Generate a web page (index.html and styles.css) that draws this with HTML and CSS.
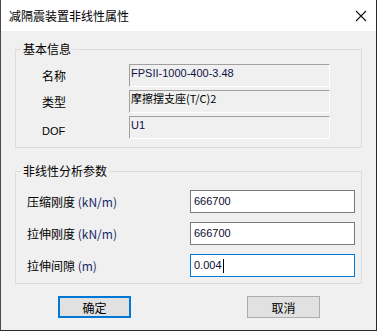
FILE: index.html
```html
<!DOCTYPE html>
<html lang="zh-CN">
<head>
    <meta charset="UTF-8">
    <title>减隔震装置非线性属性</title>
    <link rel="stylesheet" href="styles.css">
</head>
<body>
    <div class="dialog">
        <div class="titlebar">
            <span class="title">减隔震装置非线性属性</span>
            <svg class="close" width="12" height="12" viewBox="0 0 12 12">
                <path d="M1 1 L11 11 M11 1 L1 11" stroke="#111" stroke-width="1.1" fill="none"/>
            </svg>
        </div>

        <div class="content">
            <!-- 基本信息 -->
            <fieldset class="group">
                <legend>基本信息</legend>
                <div class="rows rows-info">
                    <div class="row">
                        <span class="label">名称</span>
                        <div class="readonly navy">FPSII-1000-400-3.48</div>
                    </div>
                    <div class="row">
                        <span class="label">类型</span>
                        <div class="readonly cjk">摩擦摆支座(T/C)2</div>
                    </div>
                    <div class="row">
                        <span class="label latin">DOF</span>
                        <div class="readonly navy">U1</div>
                    </div>
                </div>
            </fieldset>

            <!-- 非线性分析参数 -->
            <fieldset class="group group-params">
                <legend>非线性分析参数</legend>
                <div class="rows rows-params">
                    <div class="row">
                        <span class="label">压缩刚度 <span class="unit">(kN/m)</span></span>
                        <div class="edit">666700</div>
                    </div>
                    <div class="row">
                        <span class="label">拉伸刚度 <span class="unit">(kN/m)</span></span>
                        <div class="edit">666700</div>
                    </div>
                    <div class="row">
                        <span class="label">拉伸间隙 <span class="unit">(m)</span></span>
                        <div class="edit focused">0.004<span class="caret"></span></div>
                    </div>
                </div>
            </fieldset>

            <div class="buttons">
                <button class="btn default">确定</button>
                <button class="btn cancel">取消</button>
            </div>
        </div>
    </div>
</body>
</html>
```

FILE: styles.css
```css
html, body {
    margin: 0;
    padding: 0;
}
body {
    font-family: "Noto Sans CJK SC", "Liberation Sans", sans-serif;
    font-size: 12px;
    color: #000;
    background: #f0f0f0;
}
.dialog {
    width: 377px;
    height: 331px;
    box-sizing: border-box;
    border-left: 1px solid #4a4a4a;
    border-right: 1px solid #2b2b2b;
    border-bottom: 1px solid #2b2b2b;
    background: #f0f0f0;
    overflow: hidden;
}
.titlebar {
    height: 31px;
    background: #ffffff;
    display: flex;
    align-items: center;
    justify-content: space-between;
    padding: 0 9px 0 8px;
}
.title {
    font-size: 12px;
    line-height: 14px;
}
.close {
    display: block;
}
.content {
    padding: 11px 0 0 14px;
}
.group {
    width: 345px;
    margin: 0;
    border: 1px solid #dcdcdc;
    padding: 0;
}
.group legend {
    margin-left: 5px;
    padding: 0 2px;
    font-size: 12px;
    line-height: 14px;
}
.rows {
    display: flex;
    flex-direction: column;
}
.rows-info {
    padding: 8px 0 8px 26px;
    gap: 3px;
}
.rows-info .row {
    display: grid;
    grid-template-columns: 87px 201px;
    align-items: center;
}
.label {
    line-height: 14px;
}
.latin {
    font-family: "Liberation Sans", sans-serif;
    font-size: 11px;
    padding-top: 6px;
}
.readonly {
    height: 23px;
    box-sizing: border-box;
    border-top: 1px solid #a0a0a0;
    border-left: 1px solid #a0a0a0;
    border-right: 1px solid #ffffff;
    border-bottom: 1px solid #ffffff;
    padding: 2px 0 0 1px;
    font-family: "Liberation Sans", sans-serif;
    font-size: 11px;
    line-height: 13px;
    white-space: nowrap;
}
.readonly.navy {
    color: #101048;
}
.readonly.cjk {
    font-family: "Noto Sans CJK SC", sans-serif;
    padding-top: 0;
    line-height: 14px;
}
.group-params {
    margin-top: 16px;
}
.rows-params {
    padding: 12px 0 6px 11px;
    gap: 9px;
}
.rows-params .row {
    display: grid;
    grid-template-columns: 163px 165px;
    align-items: center;
}
.unit {
    color: #1a2a6a;
}
.edit {
    height: 23px;
    box-sizing: border-box;
    border: 1px solid #7a7a7a;
    background: #ffffff;
    padding: 0 3px;
    font-family: "Liberation Sans", sans-serif;
    font-size: 11px;
    line-height: 21px;
    color: #0a0a30;
    display: flex;
    align-items: center;
}
.edit.focused {
    border-color: #0078d7;
}
.caret {
    display: inline-block;
    width: 1px;
    height: 14px;
    background: #000;
    margin-left: 1px;
}
.buttons {
    display: flex;
    gap: 116px;
    padding: 12px 0 0 43px;
}
.btn {
    width: 73px;
    height: 22px;
    box-sizing: border-box;
    background: #e1e1e1;
    font-family: "Noto Sans CJK SC", sans-serif;
    font-size: 12px;
    color: #000;
    padding: 0;
    border-radius: 0;
}
.btn.default {
    border: 2px solid #0078d7;
}
.btn.cancel {
    border: 1px solid #adadad;
}
```
